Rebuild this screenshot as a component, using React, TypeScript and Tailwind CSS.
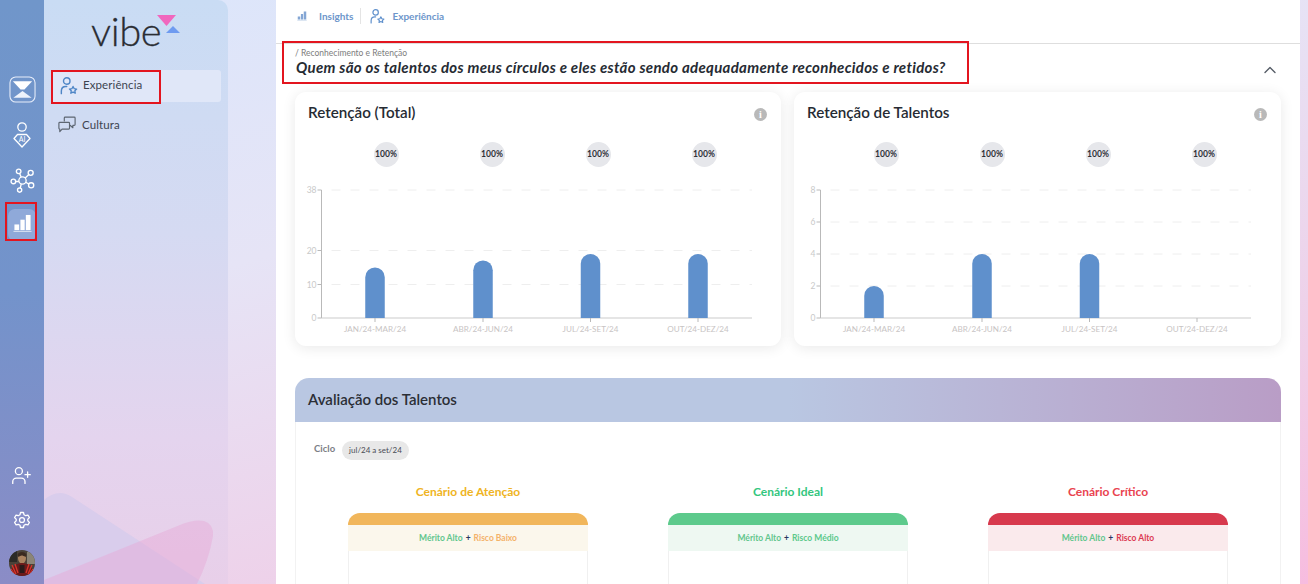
import React from "react";
import { UserPlus, ChevronUp } from "lucide-react";

const FONT = "font-['Lato','Noto_Sans',sans-serif]";

function UserStar({ className }: { className?: string }) {
  return (
    <svg viewBox="0 0 20 20" className={className} fill="none" stroke="currentColor" strokeWidth="1.6" strokeLinecap="round" strokeLinejoin="round">
      <circle cx="7.5" cy="4.5" r="3.6" />
      <path d="M1.5 18.500v-3c0-3 2-5 5-5h1" />
      <path d="M14.500 10.500l1.300 2.500 2.700.4-2 1.900.5 2.700-2.500-1.300-2.500 1.300.5-2.700-2-1.900 2.700-.4z" strokeWidth="1.5" />
    </svg>
  );
}

function Chat({ className }: { className?: string }) {
  return (
    <svg viewBox="0 0 20 20" className={className} fill="none" stroke="currentColor" strokeWidth="1.3" strokeLinecap="round" strokeLinejoin="round">
      <path d="M7 5.500V2.200a1 1 0 0 1 1-1h10a1 1 0 0 1 1 1v7.300a1 1 0 0 1-1 1h-1.500v2.500l-2.800-2.500" />
      <path d="M1 8a1 1 0 0 1 1-1h9.800a1 1 0 0 1 1 1v5.500a1 1 0 0 1-1 1H4.500l-2.500 3v-3H2a1 1 0 0 1-1-1z" />
    </svg>
  );
}

function LogoIcon() {
  return (
    <svg viewBox="0 0 28 28" className="w-[27px] h-[27px]" fill="none">
      <rect x="1" y="1" width="26" height="26" rx="6" stroke="#e8eefa" strokeWidth="1.100" />
      <path d="M4 5.500h20l-8 8.500h-4z" fill="white" />
      <path d="M14 15.500l9.500 7H4.500z" fill="#eef3fc" />
    </svg>
  );
}

function AiIcon() {
  return (
    <svg viewBox="0 0 18 26" className="w-[18px] h-[26px]" fill="none" stroke="white" strokeWidth="1.300" strokeLinejoin="round">
      <circle cx="9" cy="5" r="4.200" />
      <path d="M4.500 12.500h9l3.500 4-8 8.500-8-8.500z" />
      <text x="9" y="19.500" textAnchor="middle" fontSize="7" fill="white" stroke="none" fontFamily="Lato, sans-serif">AI</text>
    </svg>
  );
}

function NetworkIcon() {
  return (
    <svg viewBox="0 0 26 26" className="w-[25px] h-[25px]" fill="none" stroke="white" strokeWidth="1.400">
      <circle cx="13" cy="13" r="3.800" />
      <circle cx="9" cy="3.500" r="2.400" />
      <circle cx="21.500" cy="5" r="2.600" />
      <circle cx="3.500" cy="14" r="2.400" />
      <circle cx="22" cy="18" r="2.700" />
      <circle cx="10" cy="23" r="2.200" />
      <path d="M10 5.700l1.600 3.700M19.600 6.800l-3.800 3.600M5.900 14h3.300M19.700 16.700l-3.300-1.900M10.600 20.900l1.100-4.300" />
    </svg>
  );
}

function BarsIcon({ className }: { className?: string }) {
  return (
    <svg viewBox="0 0 20 20" className={className} fill="currentColor">
      <rect x="1.500" y="11" width="5" height="6" />
      <rect x="7.800" y="6" width="4.500" height="11" />
      <rect x="13.500" y="1" width="5" height="16" />
      <rect x="0.500" y="17.800" width="19" height="1" fillOpacity="0.7" />
    </svg>
  );
}

function GearIcon() {
  return (
    <svg viewBox="0 0 24 24" className="w-[18px] h-[18px]" fill="none" stroke="white" strokeWidth="1.700" strokeLinejoin="round">
      <path d="M10 2h4l.7 3 2.300 1.300 2.900-.9 2 3.400-2.200 2.100v2.200l2.200 2.100-2 3.400-2.900-.9L14.700 19l-.7 3h-4l-.7-3L7 17.700l-2.900.9-2-3.400 2.200-2.100v-2.200L2.100 8.800l2-3.400 2.900.9L9.300 5z" />
      <circle cx="12" cy="12" r="3.300" />
    </svg>
  );
}

function Avatar() {
  return (
    <svg viewBox="0 0 26 26" className="w-[26px] h-[26px] rounded-full">
      <rect width="26" height="26" fill="#4a4238" />
      <rect x="0" y="0" width="8" height="12" fill="#2c2a26" />
      <rect x="18" y="2" width="8" height="12" fill="#8b8577" />
      <ellipse cx="13" cy="8" rx="4" ry="5.500" fill="#a9825f" />
      <path d="M8.500 5c1-4 8-4 9 0l-1 2c-3-2-5-2-7 0z" fill="#3a2a20" />
      <path d="M1 26c0-8 5-13 12-13s12 5 12 13z" fill="#6b1a1a" />
      <path d="M3 15l4 9M23 15l-4 9M6 14l3 9M20 14l-3 9M2 19l4 6M24 19l-4 6" stroke="#d8352c" strokeWidth="1.300" />
      <rect x="10.500" y="15" width="5" height="8" fill="#2a1a1a" />
    </svg>
  );
}

type ChartProps = {
  ticks: { label: string; y: number }[];
  bars: { cx: number; top: number }[];
  axisX: number;
  centers: number[];
  endX: number;
};

const LABELS = ["JAN/24-MAR/24", "ABR/24-JUN/24", "JUL/24-SET/24", "OUT/24-DEZ/24"];

function Chart({ ticks, bars, axisX, centers, endX }: ChartProps) {
  const base = 143;
  return (
    <svg viewBox="0 0 486 165" className="w-[486px] h-[165px] block">
      {ticks.filter((t) => t.label !== "0").map((t) => (
        <line key={t.y} x1={axisX} x2={endX} y1={t.y} y2={t.y} stroke="#eeeeee" strokeDasharray="9 10" strokeDashoffset="-10" />
      ))}
      <line x1={axisX} x2={axisX} y1={15} y2={base} stroke="#b9b9b9" />
      <line x1={axisX} x2={endX} y1={base} y2={base} stroke="#cccccc" strokeWidth="1.200" />
      {ticks.map((t) => (
        <g key={t.label}>
          <line x1={axisX - 4} x2={axisX} y1={t.y} y2={t.y} stroke="#b9b9b9" />
          <text x={axisX - 5} y={t.y + 3} textAnchor="end" fontSize="8.500" fill="#c9c9c9" fontFamily="Lato, sans-serif">{t.label}</text>
        </g>
      ))}
      {bars.map((b) => (
        <path
          key={b.cx}
          d={`M${b.cx - 9.75} ${base}V${b.top + 9.75}a9.750 9.750 0 0 1 19.500 0V${base}z`}
          fill="#5f90cc"
        />
      ))}
      {centers.map((c, i) => (
        <g key={c}>
          <line x1={c} x2={c} y1={base} y2={base + 4} stroke="#b9b9b9" />
          <text x={c} y={base + 14} textAnchor="middle" fontSize="8.100" fill="#c8c4c4" fontFamily="Lato, sans-serif">{LABELS[i]}</text>
        </g>
      ))}
    </svg>
  );
}

function ChartCard({ title, chart, widthClass, pillClass }: { title: string; chart: ChartProps; widthClass: string; pillClass: string }) {
  return (
    <div className={`${widthClass} shrink-0 h-[254px] bg-white rounded-[11px] shadow-[0_2px_14px_rgba(0,0,0,0.09)] pt-[10px]`}>
      <div className="flex items-center justify-between pl-[13px] pr-[14px] h-[20px]">
        <span className="text-[15.200px] font-semibold text-[#262b33]">{title}</span>
        <span className="mt-[4px] w-[13px] h-[13px] rounded-full bg-[#b9b9b9] text-white text-[10px] font-bold leading-[13px] text-center font-['Liberation_Serif',serif]">i</span>
      </div>
      <div className={`grid grid-cols-[106px_106px_106px_106px] mt-[20px] ${pillClass}`}>
        {[0, 1, 2, 3].map((i) => (
          <div key={i} className="flex justify-center">
            <span className="w-[25px] h-[25px] rounded-full bg-[#e6e7eb] text-[8.500px] font-bold text-[#2e3138] flex items-center justify-center">100%</span>
          </div>
        ))}
      </div>
      <div className="mt-[8px]">
        <Chart {...chart} />
      </div>
    </div>
  );
}

function Scenario({
  title, titleClass, barClass, bandClass, riskClass, risk,
}: { title: string; titleClass: string; barClass: string; bandClass: string; riskClass: string; risk: string }) {
  return (
    <div className="w-[240px] flex flex-col items-center">
      <div className={`h-[20px] text-[12px] font-bold leading-[20px] ${titleClass}`}>{title}</div>
      <div className="w-full mt-[11px] h-[200px] rounded-t-[12px] overflow-hidden flex flex-col">
        <div className={`h-[12px] shrink-0 ${barClass}`} />
        <div className={`h-[26px] shrink-0 flex items-center justify-center gap-[3px] text-[8.500px] font-bold ${bandClass}`}>
          <span className="text-[#62c68d]">Mérito Alto</span>
          <span className="text-[#27345e]">+</span>
          <span className={riskClass}>{risk}</span>
        </div>
        <div className="flex-1 border-x border-[#f0f0f0]" />
      </div>
    </div>
  );
}

const chart1: ChartProps = {
  axisX: 26.500,
  endX: 457,
  centers: [80, 188, 295.500, 403],
  ticks: [
    { label: "38", y: 15 },
    { label: "20", y: 75.500 },
    { label: "10", y: 109.500 },
    { label: "0", y: 143 },
  ],
  bars: [
    { cx: 80, top: 92.500 },
    { cx: 188, top: 85.500 },
    { cx: 295.500, top: 79 },
    { cx: 403, top: 79 },
  ],
};

const chart2: ChartProps = {
  axisX: 26.500,
  endX: 457,
  centers: [80, 188, 295.500, 403],
  ticks: [
    { label: "8", y: 15 },
    { label: "6", y: 47 },
    { label: "4", y: 79 },
    { label: "2", y: 111 },
    { label: "0", y: 143 },
  ],
  bars: [
    { cx: 80, top: 111 },
    { cx: 188, top: 79 },
    { cx: 295.500, top: 79 },
  ],
};

export default function App() {
  return (
    <div className={`relative w-[1308px] h-[584px] overflow-hidden flex bg-[linear-gradient(165deg,#dbe6fb_0%,#e6e4f6_35%,#efcfe8_75%,#f7bcdf_100%)] ${FONT}`}>
      {/* icon rail */}
      <div className="w-[44px] h-full shrink-0 flex flex-col items-center bg-[linear-gradient(180deg,#7096ca_0%,#7393cb_50%,#8b8cc6_100%)]">
        <div className="mt-[76px] h-[27px]"><LogoIcon /></div>
        <div className="mt-[19px] h-[26px]"><AiIcon /></div>
        <div className="mt-[20px] h-[25px]"><NetworkIcon /></div>
        <div className="mt-[16px] w-[28px] h-[32px] pb-[4px] rounded-[7px] bg-[#8fa9d9] flex items-center justify-center text-white">
          <BarsIcon className="w-[19px] h-[19px]" />
        </div>
        <div className="mt-auto text-white mb-[25px] h-[21px] translate-x-[-1px]"><UserPlus className="w-[21px] h-[21px]" strokeWidth={1.500} /></div>
        <div className="mb-[21px] h-[18px]"><GearIcon /></div>
        <div className="mb-[8px] h-[26px]"><Avatar /></div>
      </div>

      {/* sidebar */}
      <div className="relative w-[184px] h-full shrink-0 rounded-tr-[10px] bg-[linear-gradient(180deg,#c9dcf4_0%,#d5daf2_40%,#e4d4ee_75%,#e8cfe9_100%)] overflow-hidden">
        <svg viewBox="0 0 184 94" className="absolute left-0 bottom-0 w-[184px] h-[94px]">
          <path d="M0 10Q8 3 16 3Q22 3 28 7L161 94H0z" fill="#d9cdec" />
          <path d="M0 90L136 35Q150 29 160 31Q170 34 169 46Q165 70 153 94H0z" fill="#e6a9d8" fillOpacity="0.45" />
        </svg>
        <div className="relative h-[70px] flex">
          <span className="absolute left-[47px] top-[7px] text-[40px] leading-[48px] font-light text-[#2a2d33] tracking-[-0.4px] [-webkit-text-stroke:0.3px_#2a2d33]">vibe</span>
          <svg viewBox="0 0 24 19" className="absolute left-[113px] top-[15px] w-[24px] h-[19px]">
            <path d="M0 0h19l-9.500 11z" fill="#f067be" />
            <path d="M9 18l7-7 7 7z" fill="#6f9bf0" />
          </svg>
        </div>
        <div className="relative mx-[7px] h-[32px] rounded-[3px] bg-[#e0e7f8] flex items-center pl-[9px] gap-[5px] text-[#3d4450] text-[11.500px]">
          <UserStar className="w-[18px] h-[18px] text-[#4f86c6]" />
          <span className="tracking-[0.1px] -mt-[2px]">Experiência</span>
        </div>
        <div className="relative mx-[7px] mt-[7px] h-[32px] flex items-center pl-[7px] gap-[6px] text-[#3d4450] text-[11.500px]">
          <Chat className="w-[18px] h-[18px] text-[#5d6672]" />
          <span className="tracking-[0.1px]">Cultura</span>
        </div>
      </div>

      <div className="w-[48px] shrink-0" />

      {/* main */}
      <div className="relative w-[1024px] h-full shrink-0 bg-white overflow-hidden">
        <div className="h-[44px] border-b border-[#dedede] flex items-start pt-[8px] pl-[21px] text-[#6d96cb] text-[10px] font-bold">
          <div className="flex items-center h-[16px] pr-[7px] border-r border-[#e4e4e4] gap-[12px]">
            <BarsIcon className="w-[10px] h-[10px] text-[#84a6d4]" />
            <span>Insights</span>
          </div>
          <div className="flex items-center h-[16px] pl-[9px] gap-[7px]">
            <UserStar className="w-[15px] h-[15px] text-[#5f90cc]" />
            <span>Experiência</span>
          </div>
        </div>

        <div className="relative h-[48px] pl-[19px] pt-[5px]">
          <div className="text-[8.500px] leading-[9px] text-[#7d7d7d]">/ Reconhecimento e Retenção</div>
          <div className="ml-[1px] text-[15px] leading-[18px] italic font-bold text-[#262b33] tracking-[0.3px]">
            Quem são os talentos dos meus círculos e eles estão sendo adequadamente reconhecidos e retidos?
          </div>
          <ChevronUp className="absolute right-[20px] top-[16px] w-[20px] h-[20px] text-[#555c66]" strokeWidth={1.600} />
        </div>

        <div className="px-[19px] flex gap-[13px]">
          <ChartCard title="Retenção (Total)" chart={chart1} widthClass="w-[486px]" pillClass="pl-[38px]" />
          <ChartCard title="Retenção de Talentos" chart={chart2} widthClass="w-[487px]" pillClass="pl-[39px]" />
        </div>

        <div className="mx-[19px] mt-[32px] h-[300px] rounded-t-[14px] overflow-hidden flex flex-col">
          <div className="h-[44px] shrink-0 pl-[13px] pb-[2px] flex items-center text-[15px] font-semibold text-[#2b2e35] bg-[linear-gradient(90deg,#b9c7e2_0%,#b9c7e2_50%,#b99dc6_100%)]">
            Avaliação dos Talentos
          </div>
          <div className="flex-1 border-x border-[#f2f2f2]">
            <div className="flex items-center h-[20px] mt-[18px] pl-[18px] gap-[7px]">
              <span className="text-[9.500px] font-bold text-[#7c7f86] -mt-[2px]">Ciclo</span>
              <span className="h-[19px] px-[7px] rounded-full bg-[#e8e8e8] text-[8px] leading-[19px] text-[#4a4d55]">jul/24 a set/24</span>
            </div>
            <div className="flex justify-center gap-[80px] mt-[22px]">
              <Scenario title="Cenário de Atenção" titleClass="text-[#efb423]" barClass="bg-[#f1b65b]" bandClass="bg-[#fbf7ec]" riskClass="text-[#f4b26a]" risk="Risco Baixo" />
              <Scenario title="Cenário Ideal" titleClass="text-[#33c67e]" barClass="bg-[#5dca8c]" bandClass="bg-[#eef8f2]" riskClass="text-[#5cc98c]" risk="Risco Médio" />
              <Scenario title="Cenário Crítico" titleClass="text-[#e9434f]" barClass="bg-[#d7394d]" bandClass="bg-[#faeaec]" riskClass="text-[#dc3a52]" risk="Risco Alto" />
            </div>
          </div>
        </div>
      </div>

      {/* annotation boxes */}
      <div className="absolute left-[5px] top-[202px] w-[32px] h-[39px] border-2 border-[#e3151f]" />
      <div className="absolute left-[51px] top-[70px] w-[110px] h-[34px] border-2 border-[#e3151f]" />
      <div className="absolute left-[282px] top-[41px] w-[687px] h-[43px] border-2 border-[#e3151f]" />
    </div>
  );
}
